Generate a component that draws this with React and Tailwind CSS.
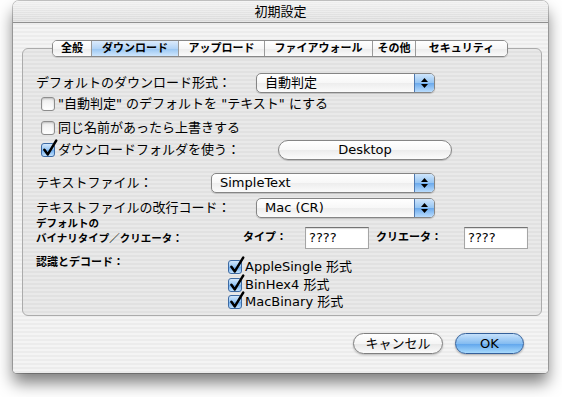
import React from "react";

function Arrows() {
  return (
    <div className="flex w-[20px] flex-col items-center justify-center gap-[2px] border-l border-[#4f79b0] bg-[linear-gradient(#cfe5fb,#95c5f3_50%,#6aa9ec_51%,#b9dcfd)]">
      <svg width="7" height="4" viewBox="0 0 7 4"><path d="M3.5 0 L7 4 L0 4Z" fill="#000" /></svg>
      <svg width="7" height="4" viewBox="0 0 7 4"><path d="M0 0 L7 0 L3.5 4Z" fill="#000" /></svg>
    </div>
  );
}

function Popup({ w, label }) {
  return (
    <div className={`flex h-[20px] ${w} overflow-hidden rounded-[5px] border border-[#858585] bg-[linear-gradient(#ffffff,#f7f7f7_50%,#ededed_51%,#fbfbfb)] shadow-[0_1px_1px_rgba(0,0,0,0.18)]`}>
      <div className="flex flex-1 items-center pl-[8px] text-[13px] leading-[18px] text-black">{label}</div>
      <Arrows />
    </div>
  );
}

function Check({ checked }) {
  return (
    <div className="relative h-[14px] w-[14px] shrink-0">
      {checked ? (
        <div className="h-full w-full rounded-[3px] border border-[#3d6aa3] bg-[linear-gradient(#d2e7fc,#93c4f3_50%,#6aaaee_51%,#c2e1fd)]" />
      ) : (
        <div className="h-full w-full rounded-[3px] border border-[#8d8d8d] bg-[linear-gradient(#ececec,#ffffff)] shadow-[inset_0_1px_2px_rgba(0,0,0,0.2)]" />
      )}
      {checked && (
        <svg className="absolute left-[1px] top-[-4px]" width="16" height="18" viewBox="0 0 16 18">
          <path d="M2.4 10.8 L5.8 15.4 L14.2 1.6" fill="none" stroke="#000" strokeWidth="2.5" strokeLinecap="round" strokeLinejoin="round" />
        </svg>
      )}
    </div>
  );
}

function CheckRow({ checked, children }) {
  return (
    <div className="flex items-center gap-[3px] pl-[5px]">
      <Check checked={checked} />
      <span className="text-[13px] leading-[16px] whitespace-nowrap">{children}</span>
    </div>
  );
}

function Field({ value }) {
  return (
    <div className="flex h-[22px] w-[64px] items-center border border-[#a5a5a5] border-t-[#747474] bg-white pl-[3px] text-[13px] shadow-[inset_0_1px_1px_rgba(0,0,0,0.15)]">
      {value}
    </div>
  );
}

const tabs = [
  { label: "全般", w: "w-[38px]" },
  { label: "ダウンロード", w: "w-[87px]", sel: true },
  { label: "アップロード", w: "w-[86px]" },
  { label: "ファイアウォール", w: "w-[108px]" },
  { label: "その他", w: "w-[43px]" },
  { label: "セキュリティ", w: "w-[92px]" },
];

export default function App() {
  return (
    <div className="h-[397px] w-[562px] overflow-hidden bg-white font-['DejaVu_Sans','Noto_Sans_CJK_JP',sans-serif] text-black">
      <div className="ml-[13px] mt-[1px] flex h-[372px] w-[535px] flex-col overflow-hidden rounded-t-[6px] rounded-b-[4px] bg-[repeating-linear-gradient(180deg,#f4f4f4_0px,#f4f4f4_2px,#ececec_2px,#ececec_4px)] shadow-[0_0_0_1px_rgba(0,0,0,0.22),0_10px_16px_rgba(0,0,0,0.5)]">
        {/* title bar */}
        <div className="flex h-[22px] shrink-0 items-center justify-center border-b border-[#8f8f8f] bg-[repeating-linear-gradient(180deg,rgba(255,255,255,0.35)_0px,rgba(255,255,255,0.35)_1px,rgba(255,255,255,0)_1px,rgba(255,255,255,0)_2px),linear-gradient(#f0f0f0,#d9d9d9)] text-[13px] leading-none">
          初期設定
        </div>

        {/* tabs */}
        <div className="relative z-10 mt-[17px] flex justify-center pr-[1px]">
          <div className="flex h-[17px] overflow-hidden rounded-[5px] border border-[#888888] shadow-[0_1px_1px_rgba(0,0,0,0.15)]">
            {tabs.map((t, i) => (
              <div
                key={t.label}
                className={`${t.w} flex items-center justify-center text-[11px] font-bold leading-none ${i > 0 ? "border-l border-[#9a9a9a]" : ""} ${
                  t.sel
                    ? "bg-[linear-gradient(#dcebfc,#b3d4f6_50%,#98c5f2_51%,#cfe6fd)]"
                    : "bg-[linear-gradient(#ffffff,#f6f6f6_50%,#ebebeb_51%,#fbfbfb)]"
                }`}
              >
                {t.label}
              </div>
            ))}
          </div>
        </div>

        {/* group box */}
        <div className="-mt-[9px] ml-[9px] h-[268px] w-[520px] rounded-[6px] border border-[#ababab] bg-[rgba(0,0,0,0.045)] pl-[13px] pt-[24px] text-[13px]">
          <div className="flex h-[20px] items-center">
            <div className="w-[220px] leading-[16px]">デフォルトのダウンロード形式：</div>
            <Popup w="w-[179px]" label="自動判定" />
          </div>
          <div className="mt-[1px] flex h-[20px] items-center">
            <CheckRow>"自動判定" のデフォルトを "テキスト" にする</CheckRow>
          </div>
          <div className="mt-[4px] flex h-[20px] items-center">
            <CheckRow>同じ名前があったら上書きする</CheckRow>
          </div>
          <div className="mt-[2px] flex h-[20px] items-center">
            <div className="w-[242px]">
              <CheckRow checked>ダウンロードフォルダを使う：</CheckRow>
            </div>
            <div className="flex h-[20px] w-[174px] items-center justify-center rounded-full border border-[#858585] bg-[linear-gradient(#ffffff,#f7f7f7_50%,#ececec_51%,#fcfcfc)] shadow-[0_1px_1px_rgba(0,0,0,0.18)] text-[13px]">
              Desktop
            </div>
          </div>
          <div className="mt-[13px] flex h-[20px] items-center">
            <div className="w-[175px] leading-[16px]">テキストファイル：</div>
            <Popup w="w-[224px]" label="SimpleText" />
          </div>
          <div className="mt-[5px] flex h-[20px] items-center">
            <div className="w-[220px] leading-[16px]">テキストファイルの改行コード：</div>
            <Popup w="w-[179px]" label="Mac (CR)" />
          </div>
          <div className="-mt-[2px] flex items-start">
            <div className="w-[207px] text-[10.5px] font-bold leading-[15px]">
              <div>デフォルトの</div>
              <div>バイナリタイプ／クリエータ：</div>
            </div>
            <div className="mt-[11px] flex h-[22px] items-center">
              <div className="w-[62px] text-[11px] font-bold">タイプ：</div>
              <Field value="????" />
              <div className="ml-[7px] w-[88px] text-[11px] font-bold">クリエータ：</div>
              <Field value="????" />
            </div>
          </div>
          <div className="mt-[7px] flex items-start">
            <div className="w-[187px] text-[11px] font-bold leading-[14px]">認識とデコード：</div>
            <div className="mt-[2px] flex flex-col">
              <div className="flex h-[18px] items-center"><CheckRow checked>AppleSingle 形式</CheckRow></div>
              <div className="flex h-[17px] items-center"><CheckRow checked>BinHex4 形式</CheckRow></div>
              <div className="flex h-[18px] items-center"><CheckRow checked>MacBinary 形式</CheckRow></div>
            </div>
          </div>
        </div>

        {/* buttons */}
        <div className="mt-[17px] flex justify-end gap-[12px] pr-[24px]">
          <div className="flex h-[21px] w-[90px] items-center justify-center rounded-full border border-[#7f7f7f] bg-[linear-gradient(#ffffff,#f5f5f5_50%,#e6e6e6_51%,#fbfbfb)] text-[13px] shadow-[0_1px_2px_rgba(0,0,0,0.25)]">
            キャンセル
          </div>
          <div className="flex h-[21px] w-[69px] items-center justify-center rounded-full border border-[#34609a] bg-[linear-gradient(#c6e1fb,#86bdf1_50%,#5ea4ec_51%,#a8dafc)] text-[13px] shadow-[0_1px_2px_rgba(0,0,0,0.3)]">
            OK
          </div>
        </div>
      </div>
    </div>
  );
}
